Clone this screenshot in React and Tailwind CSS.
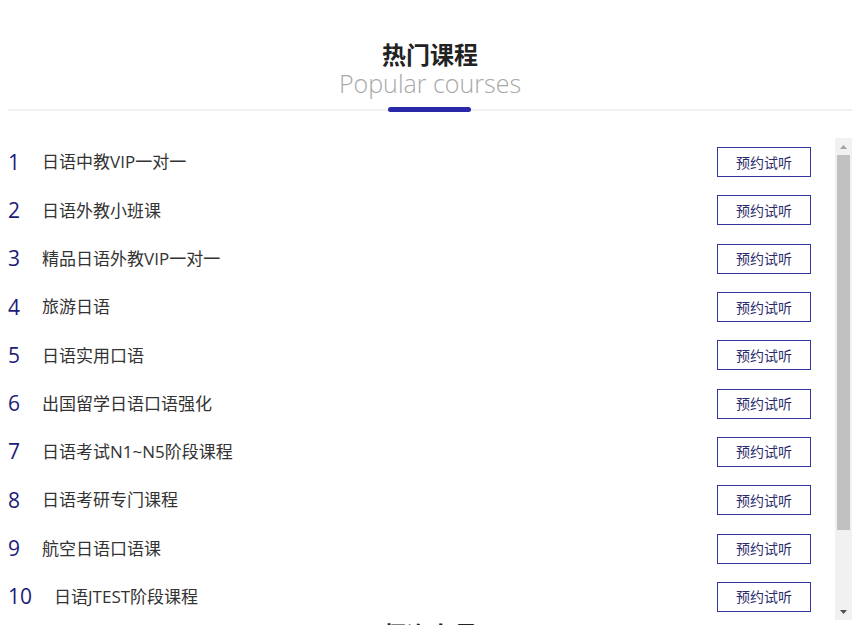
const courses = [
  "日语中教VIP一对一",
  "日语外教小班课",
  "精品日语外教VIP一对一",
  "旅游日语",
  "日语实用口语",
  "出国留学日语口语强化",
  "日语考试N1~N5阶段课程",
  "日语考研专门课程",
  "航空日语口语课",
  "日语JTEST阶段课程",
];

const font = { fontFamily: '"Open Sans", "Noto Sans CJK SC", sans-serif' };

export default function App() {
  return (
    <div className="bg-white w-[860px] h-[625px] overflow-hidden px-2" style={font}>
      <div className="pt-[40px] flex flex-col items-center">
        <h2 className="text-[24px] leading-[30px] font-bold text-[#222]">热门课程</h2>
        <p className="text-[25px] leading-[26px] font-light text-[#a8a8a8]">Popular courses</p>
      </div>
      <div className="relative mt-[13px] h-[2px] bg-[#f0f0f0]">
        <div className="absolute left-[380px] -top-[2px] w-[83px] h-[5px] rounded-full bg-[#2828a8]" />
      </div>
      <div className="mt-[27px] flex h-[482px]">
        <ul className="flex-1 overflow-hidden">
          {courses.map((c, i) => (
            <li key={i} className="h-[48.3px] flex items-center pr-[24px]">
              <span className="text-[21px] text-[#1c1c78] mr-[22px] leading-none">{i + 1}</span>
              <span className="text-[17px] text-[#333] flex-1">{c}</span>
              <button className="w-[94px] h-[30px] border border-[#3535a0] text-[14px] text-[#2c2c6c] bg-white">
                预约试听
              </button>
            </li>
          ))}
        </ul>
        <div className="w-[17px] bg-[#f1f1f1] flex flex-col">
          <div className="h-[17px] flex items-center justify-center">
            <svg width="7" height="4" viewBox="0 0 7 4"><path d="M3.5 0L7 4H0z" fill="#a3a3a3" /></svg>
          </div>
          <div className="mx-[2px] h-[375px] bg-[#c1c1c1]" />
          <div className="flex-1" />
          <div className="h-[17px] flex items-center justify-center">
            <svg width="7" height="4" viewBox="0 0 7 4"><path d="M0 0h7L3.5 4z" fill="#505050" /></svg>
          </div>
        </div>
      </div>
      <div className="flex justify-center">
        <h2 className="text-[24px] leading-[32px] font-bold text-[#222] -mt-[1px]">师资力量</h2>
      </div>
    </div>
  );
}
